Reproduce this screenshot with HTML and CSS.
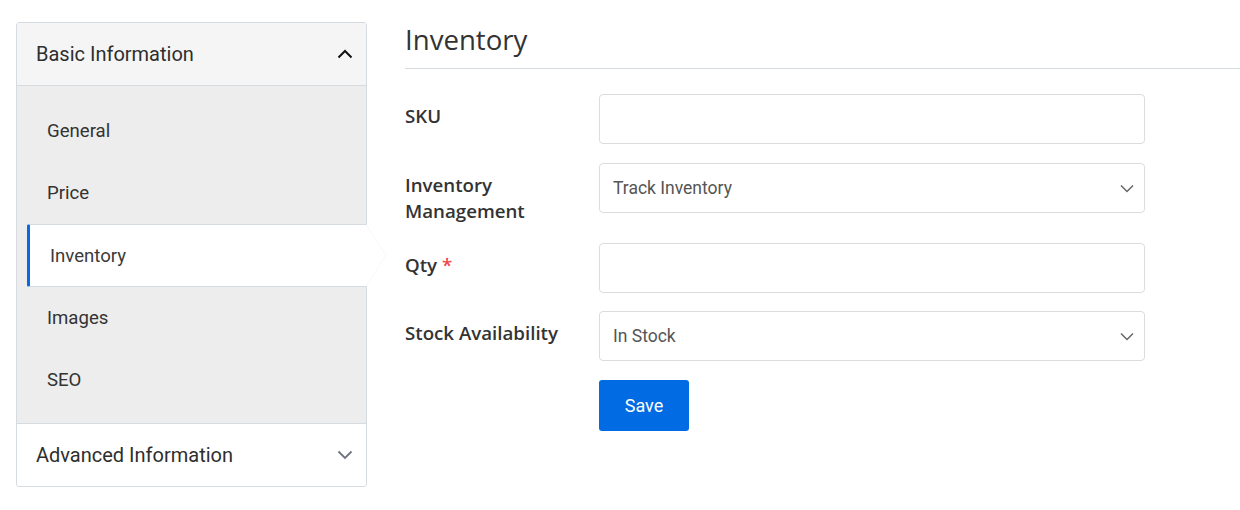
FILE: index.html
```html
<!DOCTYPE html>
<html lang="en">
<head>
<meta charset="utf-8">
<title>Inventory</title>
<link rel="stylesheet" href="styles.css">
</head>
<body>
<div class="page">
  <aside class="sidebar">
    <div class="acc-head acc-open">
      <span>Basic Information</span>
      <svg class="chev chev-up" width="16" height="10" viewBox="0 0 16 10"><path d="M1.5 8.5 L8 2 L14.5 8.5" fill="none" stroke="#111" stroke-width="2"/></svg>
    </div>
    <ul class="nav">
      <li class="nav-item">General</li>
      <li class="nav-item">Price</li>
      <li class="nav-item active">Inventory
        <svg class="pointer" width="22" height="63" viewBox="0 0 22 63"><path d="M0 0.5 L20 31.5 L0 62.5" fill="#fff" stroke="#f7f7f7" stroke-width="1"/></svg>
      </li>
      <li class="nav-item">Images</li>
      <li class="nav-item">SEO</li>
    </ul>
    <div class="acc-head acc-closed">
      <span>Advanced Information</span>
      <svg class="chev" width="16" height="10" viewBox="0 0 16 10"><path d="M1.5 1.5 L8 8 L14.5 1.5" fill="none" stroke="#6f7380" stroke-width="1.8"/></svg>
    </div>
  </aside>
  <main class="content">
    <h1 class="title">Inventory</h1>
    <form class="form">
      <div class="row">
        <label class="label">SKU</label>
        <div class="field"><input class="input" type="text"></div>
      </div>
      <div class="row">
        <label class="label">Inventory<br>Management</label>
        <div class="field">
          <div class="input select"><span>Track Inventory</span>
            <svg class="sel-chev" width="14" height="9" viewBox="0 0 14 9"><path d="M1 1.5 L7 7.5 L13 1.5" fill="none" stroke="#666" stroke-width="1.5"/></svg>
          </div>
        </div>
      </div>
      <div class="row row-tight">
        <label class="label">Qty <span class="req">*</span></label>
        <div class="field"><input class="input" type="text"></div>
      </div>
      <div class="row">
        <label class="label">Stock Availability</label>
        <div class="field">
          <div class="input select"><span>In Stock</span>
            <svg class="sel-chev" width="14" height="9" viewBox="0 0 14 9"><path d="M1 1.5 L7 7.5 L13 1.5" fill="none" stroke="#666" stroke-width="1.5"/></svg>
          </div>
        </div>
      </div>
      <div class="row">
        <span class="label"></span>
        <div class="field"><button type="button" class="btn">Save</button></div>
      </div>
    </form>
  </main>
</div>
</body>
</html>
```

FILE: styles.css
```css
* { box-sizing: border-box; }
html, body { margin: 0; padding: 0; background: #fff; }
body { font-family: Roboto, "Liberation Sans", sans-serif; color: #333; }

.page {
  display: flex;
  align-items: flex-start;
  padding: 22px 0 0 16px;
  gap: 38px;
}

.sidebar {
  width: 351px;
  flex: none;
  border: 1px solid #d6dbe0;
  border-radius: 3px;
}

.acc-head {
  height: 63px;
  display: flex;
  align-items: center;
  justify-content: space-between;
  padding: 0 13px 0 19px;
  font-size: 20px;
  color: #2e2e2e;
}
.acc-open { background: #f5f5f5; border-bottom: 1px solid #d6dbe0; }
.acc-closed { background: #fff; border-top: 1px solid #d6dbe0; border-radius: 0 0 3px 3px; }
.chev { display: block; }

.nav {
  list-style: none;
  margin: 0;
  padding: 14px 0 12px 10px;
  background: #ededed;
}
.nav-item {
  height: 62px;
  display: flex;
  align-items: center;
  padding-left: 20px;
  font-size: 18.6px;
  color: #333;
  position: relative;
}
.nav-item.active {
  height: 63px;
  background: #fff;
  border-left: 3px solid #0a6ae0;
  border-top: 1px solid #d6dbe0;
  border-bottom: 1px solid #d6dbe0;
  border-radius: 2px 0 0 2px;
  margin-right: -1px;
  color: #3a3a3a;
}
.pointer {
  position: absolute;
  right: -21px;
  top: -1px;
}

.content {
  flex: 1;
}
.title {
  margin: 0;
  font-family: "Open Sans", sans-serif;
  font-weight: 400;
  font-size: 27.6px;
  line-height: 34px;
  color: #333;
  padding-bottom: 12px;
  border-bottom: 1px solid #d6dbe0;
}

.form { padding-top: 25px; }
.row {
  display: flex;
  align-items: flex-start;
  margin-bottom: 19px;
}
.row-tight { margin-bottom: 18px; }
.label {
  width: 194px;
  flex: none;
  padding-top: 9px;
  font-family: "Open Sans", sans-serif;
  font-weight: 600;
  font-size: 18.7px;
  line-height: 26px;
  color: #333;
}
.req { color: #f0464a; }
.field { width: 546px; }
.input {
  display: flex;
  align-items: center;
  width: 100%;
  height: 50px;
  border: 1px solid #dcdcdc;
  border-radius: 4px;
  background: #fff;
  padding: 0 10px 0 13px;
  font-family: Roboto, sans-serif;
  font-size: 17.5px;
  color: #555;
  outline: none;
}
.select { justify-content: space-between; }
.sel-chev { display: block; }

.btn {
  width: 90px;
  height: 51px;
  border: none;
  border-radius: 3px;
  background: #006be2;
  color: #fff;
  font-family: Roboto, sans-serif;
  font-size: 18px;
  cursor: pointer;
}
```
